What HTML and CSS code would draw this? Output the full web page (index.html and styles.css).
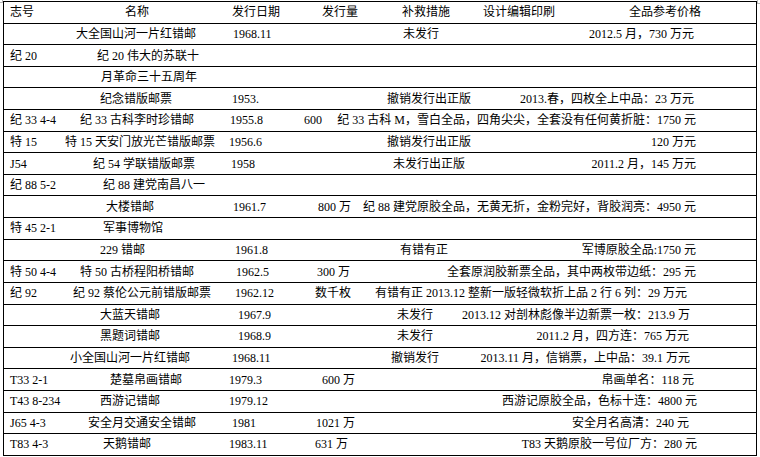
FILE: index.html
```html
<!DOCTYPE html>
<html lang="zh-CN">
<head>
<meta charset="utf-8">
<title>错版邮票参考价格</title>
<link rel="stylesheet" href="styles.css">
</head>
<body>
<span class="mark mark-tl"></span>
<span class="mark mark-tr"></span>
<div class="sheet">
  <div class="row r1">
    <span class="id">志号</span><span class="nm">名称</span><span class="dt">发行日期</span><span class="qt">发行量</span><span class="fx">补救措施</span><span class="ds">设计编辑印刷</span><span class="pr">全品参考价格</span>
  </div>
  <div class="row r2">
    <span class="id"></span><span class="nm">大全国山河一片红错邮</span><span class="dt">1968.11</span><span class="qt"></span><span class="fx">未发行</span><span class="ds"></span><span class="pr">2012.5 月，730 万元</span>
  </div>
  <div class="row r3">
    <span class="id">纪 20</span><span class="nm">纪 20 伟大的苏联十</span>
  </div>
  <div class="row r4">
    <span class="id"></span><span class="nm">月革命三十五周年</span>
  </div>
  <div class="row r5">
    <span class="id"></span><span class="nm">纪念错版邮票</span><span class="dt">1953.</span><span class="qt"></span><span class="fx">撤销发行出正版</span><span class="pr">2013.春，四枚全上中品：23 万元</span>
  </div>
  <div class="row r6">
    <span class="id">纪 33 4-4</span><span class="nm">纪 33 古科李时珍错邮</span><span class="dt">1955.8</span><span class="qt">600</span><span class="pr">纪 33 古科 M，雪白全品，四角尖尖，全套没有任何黄折脏：1750 元</span>
  </div>
  <div class="row r7">
    <span class="id">特 15</span><span class="nm">特 15 天安门放光芒错版邮票</span><span class="dt">1956.6</span><span class="qt"></span><span class="fx">撤销发行出正版</span><span class="ds"></span><span class="pr">120 万元</span>
  </div>
  <div class="row r8">
    <span class="id">J54</span><span class="nm">纪 54 学联错版邮票</span><span class="dt">1958</span><span class="qt"></span><span class="fx">未发行出正版</span><span class="ds"></span><span class="pr">2011.2 月，145 万元</span>
  </div>
  <div class="row r9">
    <span class="id">纪 88 5-2</span><span class="nm">纪 88 建党南昌八一</span>
  </div>
  <div class="row r10">
    <span class="id"></span><span class="nm">大楼错邮</span><span class="dt">1961.7</span><span class="qt">800 万</span><span class="pr">纪 88 建党原胶全品，无黄无折，金粉完好，背胶润亮：4950 元</span>
  </div>
  <div class="row r11">
    <span class="id">特 45 2-1</span><span class="nm">军事博物馆</span>
  </div>
  <div class="row r12">
    <span class="id"></span><span class="nm">229 错邮</span><span class="dt">1961.8</span><span class="qt"></span><span class="fx">有错有正</span><span class="ds"></span><span class="pr">军博原胶全品:1750 元</span>
  </div>
  <div class="row r13">
    <span class="id">特 50 4-4</span><span class="nm">特 50 古桥程阳桥错邮</span><span class="dt">1962.5</span><span class="qt">300 万</span><span class="pr">全套原润胶新票全品，其中两枚带边纸：295 元</span>
  </div>
  <div class="row r14">
    <span class="id">纪 92</span><span class="nm">纪 92 蔡伦公元前错版邮票</span><span class="dt">1962.12</span><span class="qt">数千枚</span><span class="fx wide">有错有正 2013.12 整新一版轻微软折上品 2 行 6 列：29 万元</span>
  </div>
  <div class="row r15">
    <span class="id"></span><span class="nm">大蓝天错邮</span><span class="dt">1967.9</span><span class="qt"></span><span class="fx">未发行</span><span class="ds"></span><span class="pr">2013.12 对剖林彪像半边新票一枚：213.9 万</span>
  </div>
  <div class="row r16">
    <span class="id"></span><span class="nm">黑题词错邮</span><span class="dt">1968.9</span><span class="qt"></span><span class="fx">未发行</span><span class="ds"></span><span class="pr">2011.2 月，四方连：765 万元</span>
  </div>
  <div class="row r17">
    <span class="id"></span><span class="nm">小全国山河一片红错邮</span><span class="dt">1968.11</span><span class="qt"></span><span class="fx">撤销发行</span><span class="ds"></span><span class="pr">2013.11 月，信销票，上中品：39.1 万元</span>
  </div>
  <div class="row r18">
    <span class="id">T33 2-1</span><span class="nm">楚墓帛画错邮</span><span class="dt">1979.3</span><span class="qt">600 万</span><span class="pr">帛画单名：118 元</span>
  </div>
  <div class="row r19">
    <span class="id">T43 8-234</span><span class="nm">西游记错邮</span><span class="dt">1979.12</span><span class="qt"></span><span class="pr">西游记原胶全品，色标十连：4800 元</span>
  </div>
  <div class="row r20">
    <span class="id">J65 4-3</span><span class="nm">安全月交通安全错邮</span><span class="dt">1981</span><span class="qt">1021 万</span><span class="pr">安全月名高清：240 元</span>
  </div>
  <div class="row r21">
    <span class="id">T83 4-3</span><span class="nm">天鹅错邮</span><span class="dt">1983.11</span><span class="qt">631 万</span><span class="pr">T83 天鹅原胶一号位厂方：280 元</span>
  </div>
</div>
</body>
</html>
```

FILE: styles.css
```css
html, body {
  margin: 0;
  padding: 0;
  background: #ffffff;
}

body {
  font-family: "Liberation Serif", "Noto Sans CJK SC", serif;
  font-size: 12px;
  color: #000000;
  position: relative;
  width: 760px;
  height: 457px;
  overflow: hidden;
}

.mark {
  position: absolute;
  top: 0;
  width: 2px;
  height: 2px;
  border-color: #b8b8b8;
  border-style: solid;
}

.mark-tl {
  left: 0;
  border-width: 0 1px 1px 0;
}

.mark-tr {
  left: 757px;
  width: 3px;
  height: 3px;
  border-width: 0 0 1px 1px;
}

.sheet {
  box-sizing: border-box;
  width: 754px;
  margin: 1px 0 0 3px;
  border-top: 1px solid #000;
  border-left: 1px solid #000;
  border-right: 1px solid #000;
}

.row {
  display: flex;
  align-items: center;
  box-sizing: border-box;
  height: 21.62px;
  border-bottom: 1px solid #000;
  line-height: 1;
  white-space: nowrap;
}

.row > span {
  display: block;
  box-sizing: border-box;
  flex: none;
}

.id { width: 61px; padding-left: 6px; }
.nm { width: 160px; }
.dt { width: 75px; }
.qt { width: 75px; }
.fx { width: 105px; }
.ds { width: 95px; }

.row > .pr {
  flex: 1 1 auto;
  min-width: 0;
  display: flex;
  justify-content: flex-end;
  padding-right: 60px;
}

.row > .wide { width: auto; flex: 1 1 auto; }

/* header */
.r1 .nm { padding-left: 60px; }
.r1 .dt { padding-left: 7px; }
.r1 .qt { padding-left: 22px; }
.r1 .fx { padding-left: 27px; }
.r1 .ds { padding-left: 3px; }
.r1 .pr { padding-right: 55px; }

/* name column offsets */
.r2 .nm { padding-left: 11px; }
.r3 .nm { padding-left: 32px; }
.r4 .nm { padding-left: 36px; }
.r5 .nm { padding-left: 35px; }
.r6 .nm { padding-left: 15px; }
.r7 .nm { padding-left: 0; }
.r8 .nm { padding-left: 28px; }
.r9 .nm { padding-left: 38px; }
.r10 .nm { padding-left: 41px; }
.r11 .nm { padding-left: 38px; }
.r12 .nm { padding-left: 35px; }
.r13 .nm { padding-left: 15px; }
.r14 .nm { padding-left: 8px; }
.r15 .nm { padding-left: 35px; }
.r16 .nm { padding-left: 35px; }
.r17 .nm { padding-left: 5px; }
.r18 .nm { padding-left: 45px; }
.r19 .nm { padding-left: 35px; }
.r20 .nm { padding-left: 23px; }
.r21 .nm { padding-left: 38px; }

/* date column offsets */
.r2 .dt { padding-left: 8px; }
.r5 .dt { padding-left: 7px; }
.r6 .dt { padding-left: 5px; }
.r7 .dt { padding-left: 4px; }
.r8 .dt { padding-left: 6px; }
.r10 .dt { padding-left: 8px; }
.r12 .dt { padding-left: 10px; }
.r13 .dt { padding-left: 11px; }
.r14 .dt { padding-left: 10px; }
.r15 .dt { padding-left: 13px; }
.r16 .dt { padding-left: 13px; }
.r17 .dt { padding-left: 7px; }
.r18 .dt { padding-left: 4px; }
.r19 .dt { padding-left: 4px; }
.r20 .dt { padding-left: 7px; }
.r21 .dt { padding-left: 4px; }

/* quantity column */
.r6 .qt { width: 30px; padding-left: 4px; }
.r10 .qt { padding-left: 18px; }
.r13 .qt { padding-left: 17px; }
.r14 .qt { padding-left: 15px; }
.r18 .qt { padding-left: 22px; }
.r20 .qt { padding-left: 16px; }
.r21 .qt { padding-left: 15px; }

/* remedy column */
.r2 .fx { padding-left: 28px; }
.r5 .fx { padding-left: 12px; }
.r7 .fx { padding-left: 12px; }
.r8 .fx { padding-left: 18px; }
.r12 .fx { padding-left: 25px; }
.r14 .fx { padding-left: 0; }
.r15 .fx { padding-left: 22px; }
.r16 .fx { padding-left: 22px; }
.r17 .fx { padding-left: 16px; }

/* price column right edge */
.r2 .pr, .r5 .pr, .r18 .pr { padding-right: 62px; }
.r15 .pr, .r17 .pr { padding-right: 66px; }
.r16 .pr, .r20 .pr { padding-right: 67px; }
.r19 .pr, .r21 .pr { padding-right: 59px; }
```
